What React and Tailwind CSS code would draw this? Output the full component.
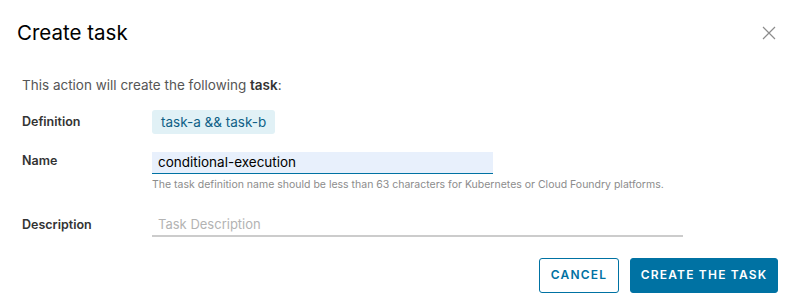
import { useState } from "react";

function IconClose() {
  return (
    <svg width="14" height="14" viewBox="0 0 14 14" fill="none" stroke="#8c8c8c" strokeWidth="1.2">
      <path d="M1 1L13 13M13 1L1 13" />
    </svg>
  );
}

export default function App() {
  const [name, setName] = useState("conditional-execution");

  return (
    <div className="h-[300px] w-[800px] bg-white font-['Inter','Lato',sans-serif] text-[#565656]">
      <div className="flex items-center justify-between pl-[17px] pr-[19px] pt-[19px]">
        <h1 className="text-[20.5px] leading-[28px] font-normal text-[#000]">Create task</h1>
        <button type="button" aria-label="Close" className="flex h-6 w-6 items-center justify-center">
          <IconClose />
        </button>
      </div>

      <div className="pl-[22px] pr-[22px] pt-[28px]">
        <p className="text-[13.5px] leading-[20px] text-[#565656]">
          This action will create the following <strong className="font-semibold text-[#333]">task</strong>:
        </p>

        <div className="mt-[15px] flex items-center">
          <div className="w-[130px] text-[12.5px] font-semibold text-[#333]">Definition</div>
          <span className="flex h-[24px] items-center rounded-[3px] bg-[#e1f1f6] px-[9px] text-[13.5px] text-[#0f5f86]">
            task-a &amp;&amp; task-b
          </span>
        </div>

        <div className="mt-[15px] flex">
          <div className="w-[130px] pt-[3px] text-[12.5px] font-semibold text-[#333]">Name</div>
          <div>
            <input
              value={name}
              onChange={(e) => setName(e.target.value)}
              className="h-[22px] w-[341px] border-b border-[#0072a3] bg-[#e8f0fc] px-[6px] text-[13.5px] text-[#000] outline-none"
            />
            <p className="mt-[4px] text-[10.5px] leading-[14px] text-[#8c8c8c]">
              The task definition name should be less than 63 characters for Kubernetes or Cloud Foundry platforms.
            </p>
          </div>
        </div>

        <div className="mt-[21px] flex items-start">
          <div className="w-[130px] pt-[3px] text-[12.5px] font-semibold text-[#333]">Description</div>
          <input
            placeholder="Task Description"
            className="h-[24px] w-[531px] border-b-2 border-[#cccccc] bg-transparent px-[6px] text-[13px] text-[#000] outline-none placeholder:text-[#b3b3b3]"
          />
        </div>
      </div>

      <div className="mt-[21px] flex justify-end gap-[11px] pr-[22px]">
        <button
          type="button"
          className="h-[35px] w-[80px] rounded-[3px] border border-[#0072a3] bg-white text-[12px] font-semibold tracking-[0.1em] text-[#0072a3]"
        >
          CANCEL
        </button>
        <button
          type="button"
          className="h-[35px] w-[148px] rounded-[3px] border border-[#0072a3] bg-[#0072a3] text-[12px] font-semibold tracking-[0.1em] text-white"
        >
          CREATE THE TASK
        </button>
      </div>
    </div>
  );
}
